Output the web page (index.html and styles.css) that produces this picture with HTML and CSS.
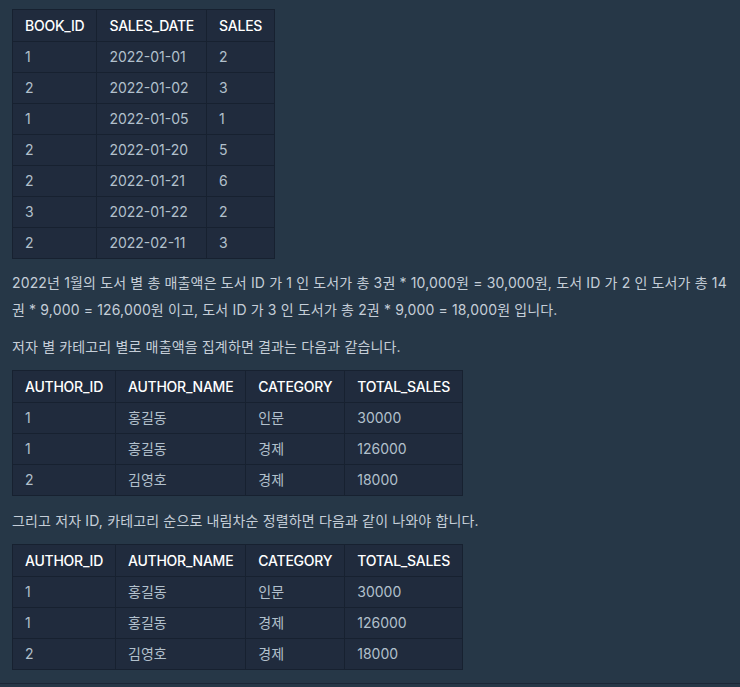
FILE: index.html
```html
<!DOCTYPE html>
<html lang="ko">
<head>
<meta charset="utf-8">
<link rel="stylesheet" href="styles.css">
</head>
<body>
<div class="markdown">
  <table class="data">
    <thead><tr><th>BOOK_ID</th><th>SALES_DATE</th><th>SALES</th></tr></thead>
    <tbody>
      <tr><td>1</td><td>2022-01-01</td><td>2</td></tr>
      <tr><td>2</td><td>2022-01-02</td><td>3</td></tr>
      <tr><td>1</td><td>2022-01-05</td><td>1</td></tr>
      <tr><td>2</td><td>2022-01-20</td><td>5</td></tr>
      <tr><td>2</td><td>2022-01-21</td><td>6</td></tr>
      <tr><td>3</td><td>2022-01-22</td><td>2</td></tr>
      <tr><td>2</td><td>2022-02-11</td><td>3</td></tr>
    </tbody>
  </table>
  <p class="text">2022년 1월의 도서 별 총 매출액은 도서 ID 가 1 인 도서가 총 3권 * 10,000원 = 30,000원, 도서 ID 가 2 인 도서가 총 14권 * 9,000 = 126,000원 이고, 도서 ID 가 3 인 도서가 총 2권 * 9,000 = 18,000원 입니다.</p>
  <p class="text">저자 별 카테고리 별로 매출액을 집계하면 결과는 다음과 같습니다.</p>
  <table class="data">
    <thead><tr><th>AUTHOR_ID</th><th>AUTHOR_NAME</th><th>CATEGORY</th><th>TOTAL_SALES</th></tr></thead>
    <tbody>
      <tr><td>1</td><td>홍길동</td><td>인문</td><td>30000</td></tr>
      <tr><td>1</td><td>홍길동</td><td>경제</td><td>126000</td></tr>
      <tr><td>2</td><td>김영호</td><td>경제</td><td>18000</td></tr>
    </tbody>
  </table>
  <p class="text text-spaced">그리고 저자 ID, 카테고리 순으로 내림차순 정렬하면 다음과 같이 나와야 합니다.</p>
  <table class="data">
    <thead><tr><th>AUTHOR_ID</th><th>AUTHOR_NAME</th><th>CATEGORY</th><th>TOTAL_SALES</th></tr></thead>
    <tbody>
      <tr><td>1</td><td>홍길동</td><td>인문</td><td>30000</td></tr>
      <tr><td>1</td><td>홍길동</td><td>경제</td><td>126000</td></tr>
      <tr><td>2</td><td>김영호</td><td>경제</td><td>18000</td></tr>
    </tbody>
  </table>
</div>
<div class="footer-line"></div>
</body>
</html>
```
FILE: styles.css
```css
html, body {
  margin: 0;
  padding: 0;
  background: #263747;
}
body {
  font-family: Inter, "Noto Sans CJK KR", sans-serif;
  font-size: 14px;
  color: #b2c0cc;
  min-height: 687px;
}
.markdown {
  padding: 9px 12px 13px 12px;
}
.data {
  border-collapse: collapse;
  background: #202b3d;
  border: 1px solid #172130;
}
.data th, .data td {
  border: 1px solid #172130;
  text-align: left;
  padding: 4px 12px;
  line-height: 22px;
  white-space: nowrap;
}
.data th {
  color: #ffffff;
  font-weight: 500;
  letter-spacing: -0.25px;
  padding-top: 5px;
}
.data td {
  color: #b2c0cc;
}
.text {
  margin: 10px 0;
  line-height: 27px;
  letter-spacing: 0.15px;
  word-break: break-all;
  color: #c5ced8;
}
.text-spaced {
  margin-top: 11px;
}
.footer-line {
  border-top: 1px solid #1b2636;
}
```
